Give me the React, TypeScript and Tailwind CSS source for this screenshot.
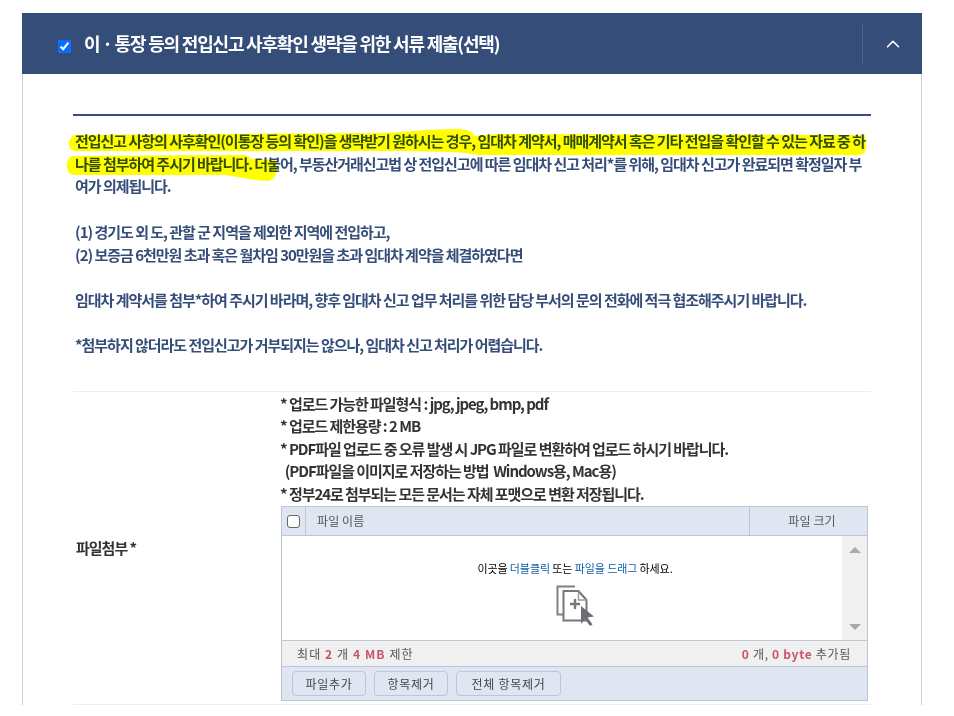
import { ChevronUp } from 'lucide-react';

const FONT = "font-['Noto_Sans_CJK_KR','Noto_Sans',sans-serif]";

const notice = [
  { id: 'a', text: '(1) 경기도 외 도, 관할 군 지역을 제외한 지역에 전입하고,' },
  { id: 'b', text: '(2) 보증금 6천만원 초과 혹은 월차임 30만원을 초과 임대차 계약을 체결하였다면' },
];

const rules = [
  '* 업로드 가능한 파일형식 : jpg, jpeg, bmp, pdf',
  '* 업로드 제한용량 : 2 MB',
  '* PDF파일 업로드 중 오류 발생 시 JPG 파일로 변환하여 업로드 하시기 바랍니다.',
  '\u00a0 (PDF파일을 이미지로 저장하는 방법\u00a0 Windows용, Mac용)',
  '* 정부24로 첨부되는 모든 문서는 자체 포맷으로 변환 저장됩니다.',
];

function DropIcon() {
  return (
    <svg width="40" height="42" viewBox="0 0 40 42" fill="none">
      <path d="M20 1.5H2.5v28H8" stroke="#808080" strokeWidth="2" />
      <path d="M8.5 6h15l8 9v20.5H8.5z" fill="#fff" stroke="#777" strokeWidth="2" />
      <path d="M23.5 6v9h8" stroke="#999" strokeWidth="1.4" />
      <path d="M20 14v10M15 19h10" stroke="#777" strokeWidth="2.4" />
      <path d="M26 21v18l4-5 5 7 2.500-1.500-5-7 6.500-1z" fill="#6b6e73" />
    </svg>
  );
}

// brush strokes, viewBox is in page coordinates
function Highlight() {
  return (
    <svg
      className="absolute left-[-13px] top-[-4px] z-20 mix-blend-multiply"
      width="810"
      height="60"
      viewBox="60 126 810 60"
    >
      <path
        d="M75 135 C71 136 69 140 69 144 C69 149 72 151 77 151 L400 151 C430 152 460 151 478 155 L860 155 C865 153 867 150 866 146 L865 135 L500 134 L474 136 C473 131 468 129 456 129 C430 129 405 132 385 133 Z"
        fill="#ffff00"
      />
      <path
        d="M72 156 C68 158 66 163 67 168 C68 172 70 175 75 175 L225 175 C240 177 255 181 268 181 C274 180 277 174 277 169 L276 160 L252 159 L245 155 L72 156 Z"
        fill="#ffff00"
      />
    </svg>
  );
}

export default function App() {
  return (
    <div className={`${FONT} h-[716px] overflow-hidden bg-white pl-[22px] pt-[13px]`}>
      <div className="w-[900px]">
        {/* Section header */}
        <div className="flex h-[61px] items-center bg-[#354d79] pl-[36px] text-white">
          <input type="checkbox" defaultChecked className="mt-[5px] h-[13px] w-[13px] accent-[#0a6cff]" />
          <h2 className="ml-[13px] flex-1 text-[18px] font-semibold tracking-[-1.2px]">
            이 · 통장 등의 전입신고 사후확인 생략을 위한 서류 제출(선택)
          </h2>
          <div className="flex h-[40px] w-[60px] items-center justify-center border-l border-[#4f648c]">
            <ChevronUp className="h-[22px] w-[22px]" strokeWidth={1.75} />
          </div>
        </div>

        <div className="border-x border-[#d2d2d2] px-[50px] pt-[40px]">
          <div className="h-[2px] bg-[#354d79]" />

          {/* Notice text */}
          <div className="relative mt-[14px] px-[2px] text-[15px] font-semibold leading-[22.7px] tracking-[-1.03px] text-[#354d79]">
            <Highlight />
            <p>
              전입신고 사항의 사후확인(이통장 등의 확인)을 생략받기 원하시는 경우, 임대차 계약서, 매매계약서 혹은 기타 전입을 확인할 수 있는 자료 중 하
              <br />
              나를 첨부하여 주시기 바랍니다. 더불어, 부동산거래신고법 상 전입신고에 따른 임대차 신고 처리*를 위해, 임대차 신고가 완료되면 확정일자 부
              <br />
              여가 의제됩니다.
            </p>
            <p className="mt-[22.7px]">
              {notice.map((line) => (
                <span key={line.id} className="block">{line.text}</span>
              ))}
            </p>
            <p className="mt-[22.7px]">
              임대차 계약서를 첨부*하여 주시기 바라며, 향후 임대차 신고 업무 처리를 위한 담당 부서의 문의 전화에 적극 협조해주시기 바랍니다.
            </p>
            <p className="mt-[22.7px]">
              *첨부하지 않더라도 전입신고가 거부되지는 않으나, 임대차 신고 처리가 어렵습니다.
            </p>
          </div>

          {/* File attach row */}
          <div className="mt-[34px] flex h-[314px] border-y border-[#eeeeee]">
            <div className="flex w-[208px] items-center pl-[3px] text-[15px] font-semibold tracking-[-1px] text-[#333]">
              파일첨부 *
            </div>
            <div className="w-[587px] pt-[1px]">
              <div className="-ml-[1px] text-[15px] font-semibold leading-[22.5px] tracking-[-1.05px] text-[#333]">
                {rules.map((rule) => (
                  <div key={rule} className="whitespace-pre">{rule}</div>
                ))}
              </div>

              {/* Upload widget */}
              <div className="mt-[1px] border border-[#bcc6d8] text-[12px] tracking-[0.1px] text-[#555]">
                <div className="flex h-[28px] bg-[#dfe6f1]">
                  <div className="flex w-[24px] items-center justify-center border-r border-[#bcc6d8]">
                    <input type="checkbox" className="h-[13px] w-[13px] appearance-none rounded-[3px] border border-[#666] bg-white" />
                  </div>
                  <div className="flex flex-1 items-center pl-[11px]">파일 이름</div>
                  <div className="flex w-[118px] items-center justify-center border-l border-[#bcc6d8] pl-[7px]">파일 크기</div>
                </div>
                <div className="flex h-[106px] border-y border-[#bcc6d8]">
                  <div className="flex flex-1 flex-col items-center pl-[26px] pt-[24px] text-[11px] tracking-[-0.1px] text-black">
                    <div>
                      이곳을 <span className="text-[#0f5ea8]">더블클릭</span> 또는 <span className="text-[#0f5ea8]">파일을 드래그</span> 하세요.
                    </div>
                    <div className="mt-[8px]">
                      <DropIcon />
                    </div>
                  </div>
                  <div className="flex w-[25px] flex-col items-center justify-between bg-[#f0f0f0] pb-[10px] pt-[11px]">
                    <div className="h-0 w-0 border-x-[6px] border-b-[6px] border-x-transparent border-b-[#a8a8a8]" />
                    <div className="h-0 w-0 border-x-[6px] border-t-[6px] border-x-transparent border-t-[#a8a8a8]" />
                  </div>
                </div>
                <div className="flex h-[25px] items-center justify-between bg-[#f0f0f0] pl-[15px] pr-[16px]">
                  <div className="tracking-[1.1px]">
                    최대 <b className="text-[#c9546b]">2</b> 개 <b className="text-[#c9546b]">4 MB</b> 제한
                  </div>
                  <div className="tracking-[0.7px]">
                    <b className="text-[#c9546b]">0</b> 개, <b className="text-[#c9546b]">0 byte</b> 추가됨
                  </div>
                </div>
                <div className="flex h-[34px] items-center gap-[8px] border-t border-[#bcc6d8] bg-[#dfe6f1] pl-[10px] tracking-[0.7px]">
                  <button className="h-[25px] w-[74px] rounded-[4px] border border-[#bcc6d8] text-[#444]">파일추가</button>
                  <button className="h-[25px] w-[74px] rounded-[4px] border border-[#bcc6d8] text-[#444]">항목제거</button>
                  <button className="h-[25px] w-[105px] rounded-[4px] border border-[#bcc6d8] text-[#444]">전체 항목제거</button>
                </div>
              </div>
            </div>
          </div>
        </div>
      </div>
    </div>
  );
}
